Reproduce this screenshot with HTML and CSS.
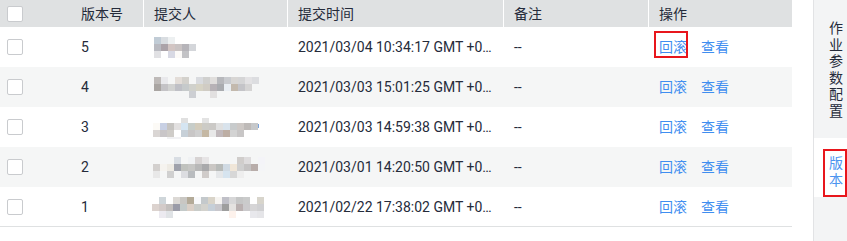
FILE: index.html
```html
<!DOCTYPE html>
<html lang="zh-CN">
<head>
<meta charset="utf-8">
<title>版本</title>
<link rel="stylesheet" href="styles.css">
</head>
<body>
<div class="page">
  <div class="main">
    <table class="grid">
      <colgroup>
        <col class="w-check"><col class="w-ver"><col class="w-user"><col class="w-time"><col class="w-note"><col class="w-op">
      </colgroup>
      <thead>
        <tr>
          <th><span class="checkbox"></span></th>
          <th class="sep">版本号</th>
          <th class="sep">提交人</th>
          <th class="sep">提交时间</th>
          <th class="sep">备注</th>
          <th>操作</th>
        </tr>
      </thead>
      <tbody>
        <tr>
          <td><span class="checkbox"></span></td>
          <td>5</td>
          <td><svg class="mosaic m1" width="42" height="21" viewBox="0 0 42 21">
            <rect x="0" y="0" width="7" height="7" fill="#c1ccd6"/><rect x="7" y="0" width="7" height="7" fill="#d9dde1"/><rect x="14" y="0" width="7" height="7" fill="#edf0f1"/>
            <rect x="0" y="7" width="7" height="7" fill="#b9bac1"/><rect x="7" y="7" width="7" height="7" fill="#aba3a9"/><rect x="14" y="7" width="7" height="7" fill="#d2c5c3"/><rect x="21" y="7" width="7" height="7" fill="#c9c3c3"/><rect x="28" y="7" width="7" height="7" fill="#b6b4b9"/><rect x="35" y="7" width="7" height="7" fill="#d4d6da"/>
            <rect x="0" y="14" width="7" height="7" fill="#e1e1e4"/><rect x="14" y="14" width="7" height="7" fill="#d8d9e4"/><rect x="21" y="14" width="7" height="7" fill="#fcfaf8"/><rect x="28" y="14" width="7" height="7" fill="#c3c3c6"/>
          </svg></td>
          <td class="time">2021/03/04 10:34:17 GMT +08:00</td>
          <td>--</td>
          <td><span class="link boxed">回滚</span><span class="link">查看</span></td>
        </tr>
        <tr>
          <td><span class="checkbox"></span></td>
          <td>4</td>
          <td><svg class="mosaic" width="105" height="21" viewBox="0 0 105 21">
            <rect x="0" y="0" width="7" height="7" fill="#bebab8"/><rect x="7" y="0" width="7" height="7" fill="#e9e9ec"/><rect x="21" y="0" width="7" height="7" fill="#e3ddd8"/><rect x="28" y="0" width="7" height="7" fill="#d3d1cc"/><rect x="42" y="0" width="7" height="7" fill="#d9dbdf"/><rect x="49" y="0" width="7" height="7" fill="#d0d0ce"/><rect x="56" y="0" width="7" height="7" fill="#e0dedc"/><rect x="63" y="0" width="7" height="7" fill="#b7b8bc"/><rect x="70" y="0" width="7" height="7" fill="#c9cbcf"/><rect x="77" y="0" width="7" height="7" fill="#d8d6d4"/><rect x="84" y="0" width="7" height="7" fill="#d5d5d6"/><rect x="91" y="0" width="7" height="7" fill="#e3e2e4"/><rect x="98" y="0" width="7" height="7" fill="#dcdde0"/>
            <rect x="0" y="7" width="7" height="7" fill="#a9a5a2"/><rect x="7" y="7" width="7" height="7" fill="#c4c3c6"/><rect x="14" y="7" width="7" height="7" fill="#d1d2d1"/><rect x="21" y="7" width="7" height="7" fill="#bfc0c6"/><rect x="28" y="7" width="7" height="7" fill="#c6cacb"/><rect x="35" y="7" width="7" height="7" fill="#d0d1cc"/><rect x="42" y="7" width="7" height="7" fill="#d6d3c5"/><rect x="49" y="7" width="7" height="7" fill="#d0ccc4"/><rect x="56" y="7" width="7" height="7" fill="#b7b2b6"/><rect x="63" y="7" width="7" height="7" fill="#a9abaf"/><rect x="70" y="7" width="7" height="7" fill="#e9eef3"/><rect x="77" y="7" width="7" height="7" fill="#c3b9ad"/><rect x="84" y="7" width="7" height="7" fill="#c4c4c8"/><rect x="91" y="7" width="7" height="7" fill="#d5d4d4"/>
            <rect x="35" y="14" width="7" height="7" fill="#cdcfd3"/><rect x="56" y="14" width="7" height="7" fill="#e2e0e0"/>
          </svg></td>
          <td class="time">2021/03/03 15:01:25 GMT +08:00</td>
          <td>--</td>
          <td><span class="link">回滚</span><span class="link">查看</span></td>
        </tr>
        <tr>
          <td><span class="checkbox"></span></td>
          <td>3</td>
          <td><svg class="mosaic m3" width="107" height="21" viewBox="0 0 107 21">
            <rect x="28" y="0" width="7" height="5" fill="#e0e0e0"/><rect x="49" y="0" width="7" height="5" fill="#e3e3e3"/>
            <rect x="0" y="5" width="7" height="7" fill="#fcfaf6"/><rect x="7" y="5" width="7" height="7" fill="#c8d0e4"/><rect x="14" y="5" width="7" height="7" fill="#c6c4c1"/><rect x="21" y="5" width="7" height="7" fill="#e2e0e0"/><rect x="28" y="5" width="7" height="7" fill="#d5e5f2"/><rect x="35" y="5" width="7" height="7" fill="#c7cdc9"/><rect x="42" y="5" width="7" height="7" fill="#d3ccbc"/><rect x="49" y="5" width="7" height="7" fill="#cccbc6"/><rect x="56" y="5" width="7" height="7" fill="#cbc9c6"/><rect x="63" y="5" width="7" height="7" fill="#e0e0e0"/><rect x="70" y="5" width="7" height="7" fill="#d9e3ec"/><rect x="77" y="5" width="7" height="7" fill="#c8cbcc"/><rect x="84" y="5" width="7" height="7" fill="#cdc8c5"/><rect x="91" y="5" width="7" height="7" fill="#bebab8"/><rect x="98" y="5" width="7" height="7" fill="#c6c8ca"/><rect x="105" y="6" width="1" height="4" fill="#7aa3dc"/>
            <rect x="0" y="12" width="7" height="7" fill="#dad6d4"/><rect x="7" y="12" width="7" height="7" fill="#c9c6c8"/><rect x="14" y="12" width="7" height="7" fill="#cfccc8"/><rect x="28" y="12" width="7" height="7" fill="#c7d0d8"/><rect x="35" y="12" width="7" height="7" fill="#c8c6c6"/><rect x="42" y="12" width="7" height="7" fill="#cfcfcf"/><rect x="49" y="12" width="7" height="7" fill="#c5b8a4"/><rect x="56" y="12" width="7" height="7" fill="#e8e8e8"/><rect x="63" y="12" width="7" height="7" fill="#c1b9bc"/><rect x="70" y="12" width="7" height="7" fill="#bdaea4"/><rect x="77" y="12" width="7" height="7" fill="#d3d3d3"/><rect x="84" y="12" width="7" height="7" fill="#c8c6c6"/>
            <rect x="14" y="19" width="7" height="2" fill="#f0f0f2"/><rect x="21" y="19" width="7" height="2" fill="#f2f2f4"/>
          </svg></td>
          <td class="time">2021/03/03 14:59:38 GMT +08:00</td>
          <td>--</td>
          <td><span class="link">回滚</span><span class="link">查看</span></td>
        </tr>
        <tr>
          <td><span class="checkbox"></span></td>
          <td>2</td>
          <td><svg class="mosaic m4" width="112" height="21" viewBox="0 0 112 21">
            <rect x="21" y="0" width="7" height="7" fill="#d8dde3"/><rect x="35" y="0" width="7" height="7" fill="#f0f2f4"/><rect x="42" y="0" width="7" height="7" fill="#d7d3d3"/><rect x="49" y="0" width="7" height="7" fill="#e6e4e5"/><rect x="84" y="0" width="7" height="7" fill="#d0cdcb"/><rect x="91" y="0" width="7" height="7" fill="#dedcdd"/><rect x="105" y="0" width="7" height="7" fill="#f4f4f8"/>
            <rect x="0" y="7" width="7" height="7" fill="#d3d0ce"/><rect x="7" y="7" width="7" height="7" fill="#f5f3ef"/><rect x="14" y="7" width="7" height="7" fill="#eeebe4"/><rect x="21" y="7" width="7" height="7" fill="#9fa2ac"/><rect x="28" y="7" width="7" height="7" fill="#c0c2be"/><rect x="35" y="7" width="7" height="7" fill="#c6c6c4"/><rect x="42" y="7" width="7" height="7" fill="#b8b8b8"/><rect x="49" y="7" width="7" height="7" fill="#a9a9ab"/><rect x="56" y="7" width="7" height="7" fill="#cac7c4"/><rect x="63" y="7" width="7" height="7" fill="#b8bbb9"/><rect x="70" y="7" width="7" height="7" fill="#d0dae3"/><rect x="77" y="7" width="7" height="7" fill="#f0e6d8"/><rect x="84" y="7" width="7" height="7" fill="#cfcfcf"/><rect x="91" y="7" width="7" height="7" fill="#c4c2c2"/><rect x="98" y="7" width="7" height="7" fill="#b8adaa"/><rect x="105" y="7" width="7" height="7" fill="#f4f5f7"/>
            <rect x="0" y="14" width="7" height="7" fill="#e8e8e8"/><rect x="14" y="14" width="7" height="7" fill="#d0d0d0"/><rect x="28" y="14" width="7" height="7" fill="#dcdde1"/><rect x="35" y="14" width="7" height="7" fill="#b9bcbf"/><rect x="49" y="14" width="7" height="7" fill="#d0ccca"/><rect x="63" y="14" width="7" height="7" fill="#e5e7e9"/><rect x="70" y="14" width="7" height="7" fill="#d6e4ef"/><rect x="77" y="14" width="7" height="7" fill="#d7d7d7"/><rect x="84" y="14" width="7" height="7" fill="#eeeeee"/>
          </svg></td>
          <td class="time">2021/03/01 14:20:50 GMT +08:00</td>
          <td>--</td>
          <td><span class="link">回滚</span><span class="link">查看</span></td>
        </tr>
        <tr>
          <td><span class="checkbox"></span></td>
          <td>1</td>
          <td><svg class="mosaic m5" width="112" height="21" viewBox="0 0 112 21">
            <rect x="7" y="0" width="7" height="7" fill="#cfd6da"/><rect x="21" y="0" width="7" height="7" fill="#dcd9d5"/><rect x="28" y="0" width="7" height="7" fill="#c9c7c3"/><rect x="35" y="0" width="7" height="7" fill="#b3aa98"/><rect x="42" y="0" width="7" height="7" fill="#f8f9fb"/><rect x="49" y="0" width="7" height="7" fill="#c4c9cc"/><rect x="56" y="0" width="7" height="7" fill="#d9d4c9"/><rect x="63" y="0" width="7" height="7" fill="#f6f4f1"/><rect x="70" y="0" width="7" height="7" fill="#c0c0c8"/><rect x="77" y="0" width="7" height="7" fill="#d7d7d8"/><rect x="84" y="0" width="7" height="7" fill="#c5c6c6"/><rect x="91" y="0" width="7" height="7" fill="#cacbcb"/><rect x="105" y="0" width="7" height="7" fill="#d8d5cc"/>
            <rect x="0" y="7" width="7" height="7" fill="#dcd3cf"/><rect x="7" y="7" width="7" height="7" fill="#d3cbc9"/><rect x="14" y="7" width="7" height="7" fill="#c3bfbd"/><rect x="21" y="7" width="7" height="7" fill="#9b9ca8"/><rect x="28" y="7" width="7" height="7" fill="#c4cac9"/><rect x="35" y="7" width="7" height="7" fill="#dacfc6"/><rect x="42" y="7" width="7" height="7" fill="#c9ccc9"/><rect x="49" y="7" width="7" height="7" fill="#d3d2cd"/><rect x="56" y="7" width="7" height="7" fill="#c6cfd8"/><rect x="63" y="7" width="7" height="7" fill="#c8c7cc"/><rect x="70" y="7" width="7" height="7" fill="#9e9e9e"/><rect x="77" y="7" width="7" height="7" fill="#e4e2e0"/><rect x="84" y="7" width="7" height="7" fill="#b9b0b0"/><rect x="91" y="7" width="7" height="7" fill="#cbcacc"/><rect x="98" y="7" width="7" height="7" fill="#d6d5d6"/><rect x="105" y="7" width="7" height="7" fill="#d0d0d2"/>
            <rect x="7" y="14" width="7" height="7" fill="#eceaf0"/><rect x="14" y="14" width="7" height="7" fill="#e0e3e6"/><rect x="77" y="14" width="7" height="7" fill="#fdf2ec"/><rect x="98" y="14" width="7" height="7" fill="#e8e8ec"/><rect x="105" y="14" width="7" height="7" fill="#e5e5e8"/>
          </svg></td>
          <td class="time">2021/02/22 17:38:02 GMT +08:00</td>
          <td>--</td>
          <td><span class="link">回滚</span><span class="link">查看</span></td>
        </tr>
      </tbody>
    </table>
  </div>
  <div class="spacer"></div>
  <aside class="side">
    <div class="tab">作业参数配置</div>
    <div class="tab active">版本</div>
  </aside>
</div>
</body>
</html>
```

FILE: styles.css
```css
* { box-sizing: border-box; }

html, body {
  margin: 0;
  padding: 0;
  background: #ffffff;
}

body {
  font-family: Roboto, "Noto Sans CJK SC", sans-serif;
  font-size: 14px;
  color: #252b3a;
}

.page {
  display: flex;
  align-items: stretch;
  width: 847px;
  height: 241px;
  overflow: hidden;
}

.main {
  width: 792px;
  flex: none;
}

.spacer {
  width: 21px;
  flex: none;
}

.grid {
  width: 792px;
  table-layout: fixed;
  border-collapse: separate;
  border-spacing: 0;
}

.w-check { width: 71px; }
.w-ver { width: 73px; }
.w-user { width: 144px; }
.w-time { width: 216px; }
.w-note { width: 145px; }
.w-op { width: 143px; }

.grid th {
  height: 27px;
  padding: 0 10px;
  background: #dfe1e2;
  font-weight: normal;
  text-align: left;
  line-height: 20px;
  vertical-align: middle;
}

.grid th:first-child,
.grid td:first-child {
  padding-left: 7px;
  padding-right: 0;
}

.grid th.sep {
  border-right: 1px solid #ffffff;
}

.grid td {
  height: 40px;
  padding: 0 10px;
  line-height: 20px;
  vertical-align: middle;
  white-space: nowrap;
  overflow: hidden;
}

.grid tbody tr:nth-child(even) td {
  background: #f5f6f6;
}

.grid tbody tr:last-child td {
  border-bottom: 1px solid #dfe1e2;
}

.grid td.time {
  text-overflow: ellipsis;
}

.checkbox {
  display: block;
  width: 16px;
  height: 16px;
  border: 1px solid #c9cbce;
  border-radius: 2px;
  background: #ffffff;
}

.mosaic {
  display: block;
}

.m3 { margin-left: -1px; margin-top: 2px; }
.m4 { margin-left: -1px; }
.m5 { margin-left: -2px; margin-top: 1px; }

.link {
  display: inline-block;
  color: #3f8ef0;
  margin-right: 14px;
  line-height: 20px;
  cursor: pointer;
}

.boxed {
  position: relative;
}

.boxed::after {
  content: "";
  position: absolute;
  left: -5px;
  right: -1px;
  top: -6px;
  bottom: -1px;
  border: 2px solid #e8161c;
}

.side {
  width: 34px;
  flex: none;
  border-left: 1px solid #e2e3e5;
  background: #f3f4f5;
}

.tab {
  padding: 20px 0 18px 15px;
  line-height: 16.6px;
  width: 100%;
  word-break: break-all;
}

.tab.active {
  position: relative;
  background: #ffffff;
  color: #4d95ef;
  padding: 17px 0 8px 15px;
  line-height: 17px;
}

.tab.active::after {
  content: "";
  position: absolute;
  left: 9px;
  width: 20px;
  top: 11px;
  bottom: 0;
  border: 2px solid #e8161c;
}
```
